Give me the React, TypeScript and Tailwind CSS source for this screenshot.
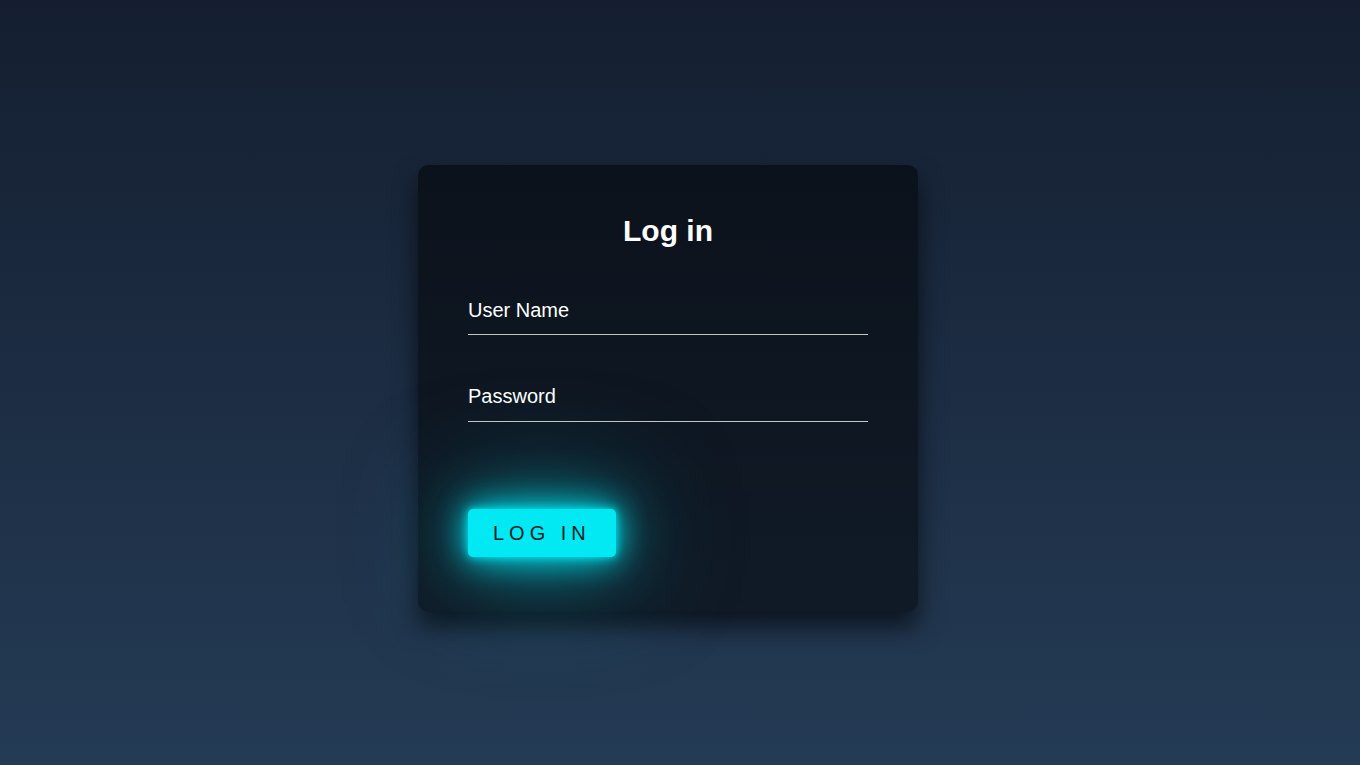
import React from "react";

export default function App() {
  return (
    <div
      className="min-h-screen w-full flex items-center justify-center bg-[linear-gradient(#141e30,#243b55)] pr-6 pt-3"
      style={{ fontFamily: '"Liberation Sans", Arial, sans-serif' }}
    >
      <div className="w-[500px] rounded-[10px] bg-black/50 shadow-[0_15px_25px_rgba(0,0,0,0.6)] px-[50px] pt-[48px] pb-[55px]">
        <h2 className="text-center text-white font-bold text-[30px] leading-[35px] mb-[43px]">
          Log in
        </h2>
        <div className="mb-[43px] border-b border-[#c4c4c4] pt-[8px] pb-[12px]">
          <div className="text-white text-[20px] leading-[23px]">User Name</div>
        </div>
        <div className="border-b border-[#c4c4c4] pt-[7px] pb-[13px]">
          <div className="text-white text-[20px] leading-[23px]">Password</div>
        </div>
        <div className="mt-[87px] flex">
          <button className="h-[48px] rounded-[5px] bg-[#03e9f4] px-[25px] text-[20px] tracking-[5px] text-[#0a1e21] shadow-[0_0_8px_#03e9f4,0_0_30px_rgba(3,233,244,0.9),0_0_60px_rgba(3,233,244,0.7),0_0_120px_rgba(3,233,244,0.5)]">
            LOG IN
          </button>
        </div>
      </div>
    </div>
  );
}
